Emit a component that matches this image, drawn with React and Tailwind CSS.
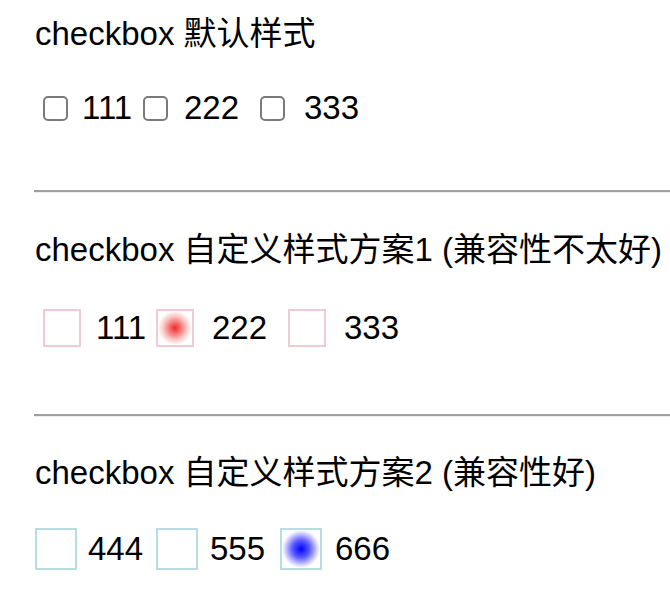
const font = { fontFamily: '"Liberation Sans", "Noto Sans CJK SC", sans-serif' };

function NativeBox() {
    return <span className="w-[25px] h-[25px] shrink-0 rounded-[5px] border-2 border-[#7a7a7a] bg-white" />;
}

function PinkBox({ checked }) {
    return (
        <span
            className={`w-[38px] h-[38px] shrink-0 border-2 border-[#f1cad2] ${checked
                ? "bg-[radial-gradient(circle_closest-side,#ec2b2b,#f36b6b_30%,#fbc4c4_68%,#ffffff_100%)]"
                : "bg-white"
                }`}
        />
    );
}

function BlueBox({ checked }) {
    return (
        <span
            className={`w-[42px] h-[42px] shrink-0 border-2 border-[#b9dbe4] ${checked
                ? "bg-[radial-gradient(circle_closest-side,#0000ff,#5a5aff_45%,#d6d6ff_85%,#ffffff_100%)]"
                : "bg-white"
                }`}
        />
    );
}

function Divider() {
    return <div className="h-[3px] border-t-2 border-[#a0a0a0] border-b border-b-[#ececec]" />;
}

export default function App() {
    return (
        <div className="min-h-[602px] bg-white text-black pl-[35px] pt-[15px]" style={font}>
            {/* default checkboxes */}
            <p className="text-[33px] leading-[37px]">checkbox 默认样式</p>
            <div className="mt-[34px] h-[44px] flex items-center pl-[8px] text-[33px]">
                <NativeBox />
                <span className="ml-[14px] w-[61px]">111</span>
                <NativeBox />
                <span className="ml-[16px] w-[76px]">222</span>
                <NativeBox />
                <span className="ml-[19px]">333</span>
            </div>

            <div className="mt-[60px] -ml-[1px]">
                <Divider />
            </div>

            {/* custom style 1 */}
            <p className="mt-[38px] text-[33px] leading-[37px]">checkbox 自定义样式方案1 (兼容性不太好)</p>
            <div className="mt-[38px] h-[44px] flex items-center pl-[8px] text-[33px]">
                <PinkBox />
                <span className="ml-[15px] w-[60px]">111</span>
                <PinkBox checked />
                <span className="ml-[18px] w-[76px]">222</span>
                <PinkBox />
                <span className="ml-[18px]">333</span>
            </div>

            <div className="mt-[64px] -ml-[1px]">
                <Divider />
            </div>

            {/* custom style 2 */}
            <p className="mt-[37px] text-[33px] leading-[37px]">checkbox 自定义样式方案2 (兼容性好)</p>
            <div className="mt-[36px] h-[44px] flex items-center text-[33px]">
                <BlueBox />
                <span className="ml-[11px] w-[68px]">444</span>
                <BlueBox />
                <span className="ml-[12px] w-[70px]">555</span>
                <BlueBox checked />
                <span className="ml-[13px]">666</span>
            </div>
        </div>
    );
}
